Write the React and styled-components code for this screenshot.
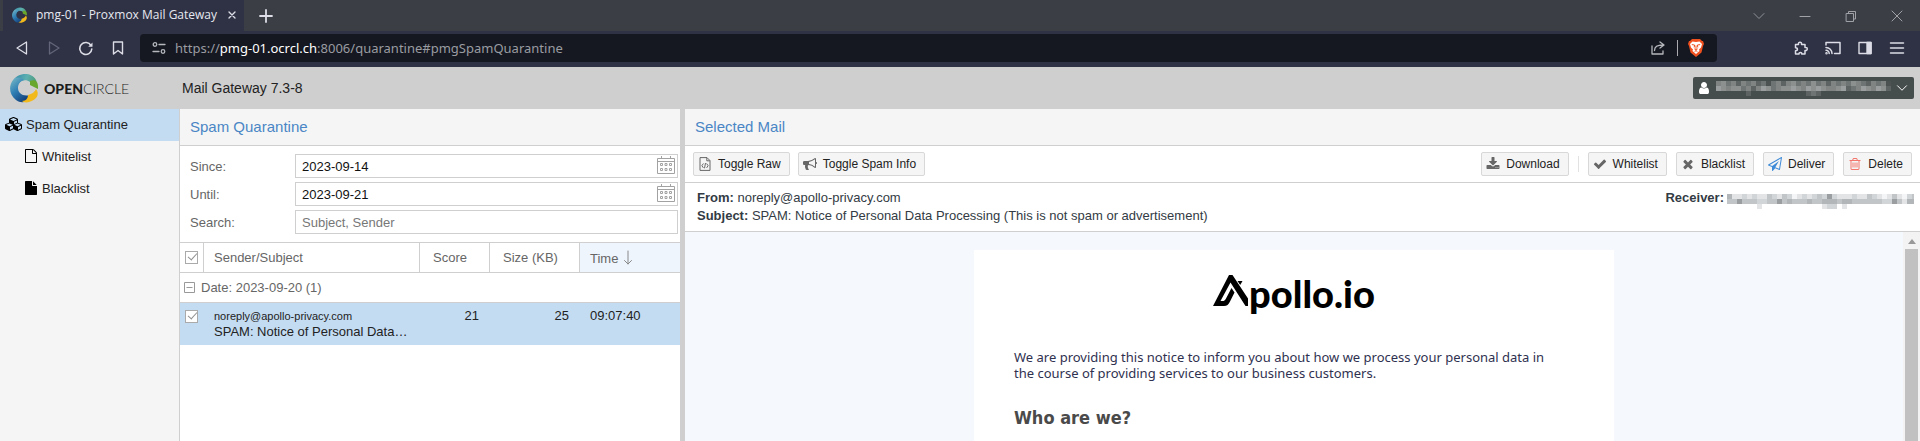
import React from "react";
import styled, { createGlobalStyle } from "styled-components";

const Global = createGlobalStyle`
  *, *::before, *::after { box-sizing: border-box; }
  body { margin: 0; font-family: "Liberation Sans", Arial, sans-serif; font-size: 13px; }
  button { font: inherit; border: 0; background: none; padding: 0; cursor: pointer; }
  h1, h2, p { margin: 0; font-weight: normal; }
  svg { flex-shrink: 0; }
`;

/* ---------- icons ---------- */

const FA = {
  download: "M1344 1344q0-26-19-45t-45-19-45 19-19 45 19 45 45 19 45-19 19-45zm256 0q0-26-19-45t-45-19-45 19-19 45 19 45 45 19 45-19 19-45zm128-224v320q0 40-28 68t-68 28h-1472q-40 0-68-28t-28-68v-320q0-40 28-68t68-28h465l135 136q58 56 136 56t136-56l136-136h464q40 0 68 28t28 68zm-325-569q17 41-14 70l-448 448q-18 19-45 19t-45-19l-448-448q-31-29-14-70 17-39 59-39h256v-448q0-26 19-45t45-19h256q26 0 45 19t19 45v448h256q42 0 59 39z",
  check: "M1671 566q0 40-28 68l-724 724-136 136q-28 28-68 28t-68-28l-136-136-362-362q-28-28-28-68t28-68l136-136q28-28 68-28t68 28l294 295 656-657q28-28 68-28t68 28l136 136q28 28 28 68z",
  times: "M1490 1322q0 40-28 68l-136 136q-28 28-68 28t-68-28l-294-294-294 294q-28 28-68 28t-68-28l-136-136q-28-28-28-68t28-68l294-294-294-294q-28-28-28-68t28-68l136-136q28-28 68-28t68 28l294 294 294-294q28-28 68-28t68 28l136 136q28 28 28 68t-28 68l-294 294 294 294q28 28 28 68z",
  user: "M1536 1399q0 109-62.5 187t-150.5 78h-854q-88 0-150.5-78t-62.5-187q0-85 8.5-160.5t31.5-152 58.5-131 94-89 134.5-34.5q131 128 313 128t313-128q76 0 134.5 34.5t94 89 58.5 131 31.5 152 8.5 160.5zm-256-887q0 159-112.5 271.5t-271.5 112.5-271.5-112.5-112.5-271.5 112.5-271.5 271.5-112.5 271.5 112.5 112.5 271.5z",
  plane: "M1764 11q33 24 27 64l-256 1536q-5 29-32 45-14 8-31 8-11 0-24-5l-527-215-298 327q-18 21-47 21-14 0-23-4-19-7-30-23.5t-11-36.5v-452l-472-193q-37-14-40-55-3-39 32-59l1664-960q35-21 68 2zm-342 1499l221-1323-1434 827 336 137 863-639-478 797z",
  fileO: "M1596 380q28 28 48 76t20 88v1152q0 40-28 68t-68 28h-1344q-40 0-68-28t-28-68v-1600q0-40 28-68t68-28h896q40 0 88 20t76 48zm-444-244v376h376q-10-29-22-41l-313-313q-12-12-41-22zm384 1528v-1024h-416q-40 0-68-28t-28-68v-416h-768v1536h1280z",
  file: "M1152 512v-472q22 14 36 28l408 408q14 14 28 36h-472zm-128 32q0 40 28 68t68 28h544v1056q0 40-28 68t-68 28h-1344q-40 0-68-28t-28-68v-1600q0-40 28-68t68-28h800v544z",
  trash: "M704 736v576q0 14-9 23t-23 9h-64q-14 0-23-9t-9-23v-576q0-14 9-23t23-9h64q14 0 23 9t9 23zm256 0v576q0 14-9 23t-23 9h-64q-14 0-23-9t-9-23v-576q0-14 9-23t23-9h64q14 0 23 9t9 23zm256 0v576q0 14-9 23t-23 9h-64q-14 0-23-9t-9-23v-576q0-14 9-23t23-9h64q14 0 23 9t9 23zm128 724v-948h-896v948q0 22 7 40.5t14.5 27 10.5 8.5h832q3 0 10.5-8.5t14.5-27 7-40.5zm-672-1076h448l-48-117q-7-9-17-11h-317q-10 2-17 11zm928 32v64q0 14-9 23t-23 9h-96v948q0 83-47 143.5t-113 60.5h-832q-66 0-113-58.5t-47-141.5v-952h-96q-14 0-23-9t-9-23v-64q0-14 9-23t23-9h309l70-167q15-37 54-63t79-26h320q40 0 79 26t54 63l70 167h309q14 0 23 9t9 23z",
  bullhorn: "M1664 640q53 0 90.5 37.5t37.5 90.5-37.5 90.5-90.5 37.5v384q0 52-38 90t-90 38q-417-347-812-380-58 19-91 66t-31 100.5 40 92.5q-20 33-23 65.5t6 58 33.5 55 48 50 61.5 50.5q-29 58-111.5 83t-168.5 11.5-132-55.5q-7-23-29.5-87.5t-32-94.5-23-89-15-101 3.5-98.5 22-110.5h-122q-66 0-113-47t-47-113v-192q0-66 47-113t113-47h480q435 0 896-384 52 0 90 38t38 90v384zm-128 604v-954q-394 302-768 343v270q377 42 768 341z",
  cubes: "M640 1632l384-192v-314l-384 164v342zm-64-454l404-173-404-173-404 173zm1088 454l384-192v-314l-384 164v342zm-64-454l404-173-404-173-404 173zm-448-293l384-165v-266l-384 164v267zm-64-379l441-189-441-189-441 189zm1088 518v416q0 36-19 67t-52 47l-448 224q-25 14-57 14t-57-14l-448-224q-4-2-7-4-2 2-7 4l-448 224q-25 14-57 14t-57-14l-448-224q-33-16-52-47t-19-67v-416q0-38 21.5-70t56.5-48l434-186v-400q0-38 21.5-70t56.5-48l448-192q23-10 50-10t50 10l448 192q35 16 56.5 48t21.5 70v400l434 186q36 16 57 48t21 70z",
};

const Fa = ({ name, size = 14, wide }) => (
  <svg width={wide ? 18 : size} height={size} viewBox={wide ? "0 0 2304 1792" : "0 0 1792 1792"} fill="currentColor" aria-hidden="true">
    <path d={FA[name]} />
  </svg>
);

const Line = ({ size = 16, width = 1.3, children }) => (
  <svg width={size} height={size} viewBox="0 0 16 16" fill="none" stroke="currentColor" strokeWidth={width} strokeLinejoin="round" strokeLinecap="round" aria-hidden="true">
    {children}
  </svg>
);

const FileCode = () => (
  <svg width="14" height="14" viewBox="0 0 14 14" fill="none" stroke="currentColor" aria-hidden="true">
    <path d="M2 .6h7l3 3v9.8H2z M8.8.8v3h3" />
    <path d="M5.4 6.5 3.9 8.7l1.5 2.2M8.6 6.5l1.5 2.2-1.5 2.2M7.5 6l-1 5.3" />
  </svg>
);

const OpenCircleMark = ({ size, id }) => (
  <svg width={size} height={size} viewBox="0 0 30 30" aria-hidden="true">
    <defs>
      <linearGradient id={id + "a"} x1="0" y1="0" x2="1" y2="0.2">
        <stop offset="0" stopColor="#2f86a8" /><stop offset="0.6" stopColor="#5db0b0" /><stop offset="1" stopColor="#4f9d7c" />
      </linearGradient>
      <linearGradient id={id + "b"} x1="0" y1="0" x2="0.7" y2="1">
        <stop offset="0" stopColor="#7cbdc6" /><stop offset="0.5" stopColor="#2f7fb5" /><stop offset="1" stopColor="#123d78" />
      </linearGradient>
    </defs>
    <path d="M3 8C7 0 21-2 26 7l1 4-7-2C15 5 8 8 7 15z" fill={`url(#${id}a)`} />
    <path d="M20 8c5-2 8 0 8 6v2l-8-4z" fill="#69a62c" />
    <path d="M4 6C-2 12-1 22 6 27c5 4 11 2 13-1l1-4C13 24 8 20 8 15c0-4 2-7 6-8-4-3-8-3-10-1z" fill={`url(#${id}b)`} />
    <path d="M18 22c4-1 7-3 8-6 4 5 1 11-7 13-3 1-6 0-7-1 4 0 6-3 6-6z" fill="#f2b91d" />
  </svg>
);

const BraveLion = () => (
  <svg width="18" height="20" viewBox="0 0 18 20" aria-hidden="true">
    <path d="M5 1h8l2 2h1l1 3-1 2-1.500 6.500L9 19l-5.500-4.500L2 8 1 6l1-3h1z" fill="#f0501e" />
    <path d="M5.500 3.500 9 4l3.500-.5L15 6l-1 3.500-2 2 .5 1.500L9 16l-3.500-3 .5-1.500-2-2L3 6z" fill="#fff" />
    <path d="M4.800 6.600 7.600 7l-.4 2.500M13.200 6.600l-2.800.4.4 2.500M9 7.500v3.500M7.300 10.800 9 12l1.700-1.200M7.600 13.600 9 12.600l1.400 1" stroke="#f0501e" fill="none" />
  </svg>
);

const Calendar = () => (
  <svg width="18" height="18" viewBox="0 0 18 18" fill="none" stroke="#a2a2a2" aria-hidden="true">
    <path d="M.5 2.500h17v15H.5zM.5 5.500h17M4.500 0v3M13.500 0v3" />
    <path d="M3.500 7.500h2v2h-2zM8 7.500h2v2H8zM12.500 7.500h2v2h-2zM3.500 12.500h2v2h-2zM8 12.500h2v2H8zM12.500 12.500h2v2h-2z" />
  </svg>
);

const ApolloA = () => (
  <svg width="36" height="34" viewBox="0 0 36 34" aria-hidden="true">
    <path d="M16 1h3.500L35 24.500V32h-2.500L17.500 8.500 7.500 27h2c1.500 0 2.500-.5 3.500-2.500L18.500 14l3 4.500-4.500 9c-1.500 3-3 4.500-6 4.500H0z" />
    <path d="M24.500 7h5l-2.300 4z" />
  </svg>
);

/* Rows of grey levels for a name that is shown only as coarse blocks. */
const Mosaic = ({ width, cell, rows, label }) => (
  <svg width={width} height={cell * rows.length} role="img" aria-label={label} shapeRendering="crispEdges">
    {rows.map((row, y) => row.map((c, x) => c && <rect key={`${x}-${y}`} x={x * cell} y={y * cell} width={cell} height={cell} fill={c} />))}
  </svg>
);

const shades = (text, palette) => [...text].map((ch) => (ch === "." ? null : palette[+ch]));
const darkPalette = ["#4c5251", "#5d6362", "#6e7473", "#808584", "#8c9190", "#9a9e9e"];
const lightPalette = ["#f4f5f6", "#e2e4e6", "#d2d5d7", "#c2c5c7", "#b3b6b8", "#9a9ea1"];
const userRows = [
  shades("34231323120231342324231323243213230", darkPalette),
  shades("54344231354234454354543345123543541", darkPalette),
  shades("......1...........121..............", darkPalette),
];
const receiverRows = [
  shades("41121211321320121232521112113210131023", lightPalette),
  shades("33533322335343334334443443333332253144", lightPalette),
  shades("......1............122.1..............", lightPalette),
];

/* ---------- browser chrome ---------- */

const Page = styled.div`
  display: flex;
  flex-direction: column;
  min-height: 100vh;
  background: #fff;
`;

const TabBar = styled.div`
  display: flex;
  justify-content: space-between;
  height: 31px;
  padding-left: 3px;
  background: #3c3e46;
  color: #a0a2a8;
`;

const TabGroup = styled.div`
  display: flex;
  align-items: center;
`;

const Tab = styled.div`
  display: flex;
  align-items: center;
  gap: 8px;
  width: 241px;
  height: 31px;
  padding: 0 6px 2px 9px;
  background: #2f3144;
  color: #e6e8f0;
  font: 500 12px "Open Sans", sans-serif;
`;

const TabTitle = styled.span`
  flex: 1;
  white-space: nowrap;
`;

const ChromeButton = styled.button`
  display: flex;
  align-items: center;
  justify-content: center;
  width: ${(p) => p.$w || 32}px;
  height: 28px;
  color: ${(p) => p.$color || "#dcdde6"};
`;

const NavBar = styled.div`
  display: flex;
  align-items: center;
  height: 36px;
  padding: 0 7px 2px 6px;
  background: #2f3144;
`;

const AddressBar = styled.div`
  display: flex;
  align-items: center;
  flex: 1;
  height: 28px;
  margin: 0 68px 0 6px;
  padding: 0 3px;
  border-radius: 4px;
  background: #151820;
  color: #9a9ca2;
`;

const Address = styled.div`
  flex: 1;
  font: 13px "Noto Sans", sans-serif;
  b { font-weight: 400; color: #fff; }
`;

const Divider = styled.span`
  width: 1px;
  height: 16px;
  background: ${(p) => p.$color || "#a9abb0"};
`;

/* ---------- application header ---------- */

const AppHeader = styled.header`
  display: flex;
  align-items: center;
  height: 42px;
  padding: 0 6px 0 10px;
  background: #cfcfcf;
`;

const Brand = styled.a`
  display: flex;
  align-items: center;
  gap: 4px;
  width: 172px;
  color: #1c1c1c;
  text-decoration: none;
  font: 300 14px Lato, sans-serif;
  b { font-weight: 900; }
`;

const Product = styled.h1`
  flex: 1;
  font-size: 14px;
  color: #222;
`;

const UserButton = styled.button`
  display: flex;
  align-items: center;
  gap: 5px;
  height: 22px;
  padding: 0 6px 0 4px;
  border-radius: 2px;
  background: #464d4d;
  color: #fff;
`;

/* ---------- work area ---------- */

const Work = styled.div`
  display: flex;
  flex: 1;
`;

const Sidebar = styled.nav`
  width: 180px;
  border-right: 1px solid #cfcfcf;
  background: #f5f5f5;
`;

const NavItem = styled.a`
  display: flex;
  align-items: center;
  gap: ${(p) => (p.$child ? 4 : 3)}px;
  height: 32px;
  padding: 0 0 2px ${(p) => (p.$child ? 24 : 5)}px;
  background: ${(p) => (p.$active ? "#c4dcf2" : "none")};
  color: #222;
  text-decoration: none;
  svg { color: #000; }
`;

const Panel = styled.section`
  display: flex;
  flex-direction: column;
  ${(p) => (p.$grow ? "flex: 1; min-width: 0;" : "width: 505px; border-right: 5px solid #cfcfcf;")}
`;

const PanelTitle = styled.h2`
  height: 37px;
  padding: 0 10px;
  border-bottom: 1px solid #cfcfcf;
  background: #f5f5f5;
  color: #4a86c5;
  font-size: 15px;
  line-height: 35px;
`;

const Filters = styled.form`
  display: grid;
  gap: 4px;
  padding: 8px 2px 8px 10px;
`;

const Field = styled.div`
  display: grid;
  grid-template-columns: 105px 1fr;
  align-items: center;
  color: #666;
`;

const InputBox = styled.div`
  display: flex;
  align-items: center;
  height: 24px;
  padding-right: 2px;
  border: 1px solid #cfcfcf;
  input {
    flex: 1;
    min-width: 0;
    height: 22px;
    padding: 0 6px;
    border: 0;
    outline: 0;
    background: none;
    font: inherit;
    color: #111;
  }
  input::placeholder { color: #777; opacity: 1; }
`;

const Grid = styled.table`
  width: 100%;
  table-layout: fixed;
  border-spacing: 0;
  color: #222;
`;

const HeadCell = styled.th`
  height: 31px;
  padding: 0 0 0 ${(p) => p.$pad || 10}px;
  border: solid #cfcfcf;
  border-width: 1px 0 1px ${(p) => (p.$first ? 0 : 1)}px;
  background: ${(p) => (p.$sorted ? "#eff5fd" : "#fff")};
  color: #666;
  font-weight: normal;
  text-align: left;
  svg { vertical-align: -3px; color: #888; }
`;

const CheckCell = styled.td`
  padding: 7px 0 0 5px;
  vertical-align: top;
`;

const GroupCell = styled.td`
  height: 30px;
  padding: 0 4px;
  border-bottom: 1px solid #cfcfcf;
  color: #666;
`;

const GroupToggle = styled.button`
  display: flex;
  align-items: center;
  gap: 6px;
  color: inherit;
`;

const MailRow = styled.tr`
  height: 42px;
  background: #c4dcf2;
`;

const Cell = styled.td`
  padding: 5px 10px 5px 11px;
  vertical-align: top;
  text-align: ${(p) => p.$align || "left"};
  line-height: 16px;
`;

const Sender = styled.div`
  font-size: 11px;
`;

const Tick = styled.input.attrs({ type: "checkbox" })`
  appearance: none;
  display: block;
  width: 13px;
  height: 13px;
  margin: 0;
  border: 1px solid #aaa;
  background: #fff;
  &:checked::after {
    content: "";
    display: block;
    width: 5px;
    height: 9px;
    margin: -1px 0 0 4px;
    border: solid #909090;
    border-width: 0 1px 1px 0;
    transform: rotate(42deg);
  }
`;

/* ---------- selected mail ---------- */

const Toolbar = styled.div`
  display: flex;
  align-items: center;
  justify-content: space-between;
  height: 37px;
  padding: 0 8px;
  border-bottom: 1px solid #cfcfcf;
`;

const Actions = styled.div`
  display: flex;
  align-items: center;
  gap: ${(p) => p.$gap}px;
`;

const ToolButton = styled.button`
  display: flex;
  align-items: center;
  gap: 6px;
  height: 24px;
  padding: 0 8px 0 4px;
  border: 1px solid #d8d8d8;
  border-radius: 2px;
  background: #f5f5f5;
  color: #222;
  font-size: 12px;
  svg { color: ${(p) => p.$icon || "#666"}; }
`;

const Envelope = styled.div`
  display: flex;
  justify-content: space-between;
  height: 49px;
  padding: 6px 6px 0 12px;
  border-bottom: 1px solid #cfcfcf;
  color: #333b44;
  font-size: 13px;
  line-height: 18px;
`;

const Receiver = styled.div`
  display: flex;
  gap: 3px;
  svg { margin-top: 5px; }
`;

const Viewer = styled.div`
  display: flex;
  flex: 1;
  background: #f5f9fd;
`;

const MailCanvas = styled.div`
  flex: 1;
  padding: 18px 0 0;
`;

const Letter = styled.article`
  width: 640px;
  height: 100%;
  margin: 0 auto;
  padding: 24px 48px 0 40px;
  background: #fff;
  color: #2f3150;
  font: 13px/16px "Noto Sans", sans-serif;
  h2 {
    margin-top: 24px;
    color: #4a4a4a;
    font: bold 18px/26px "DejaVu Sans Condensed", "DejaVu Sans", sans-serif;
  }
`;

const ApolloLogo = styled.div`
  display: flex;
  justify-content: center;
  height: 75px;
  padding-left: 8px;
  color: #000;
  font: 900 38px/38px Lato, sans-serif;
`;

const ScrollTrack = styled.div`
  display: flex;
  flex-direction: column;
  align-items: center;
  width: 17px;
  padding: 7px 1px 0;
  background: #f3f3f3;
  &::before {
    content: "";
    margin-bottom: 5px;
    border: solid transparent;
    border-width: 0 4px 5px;
    border-bottom-color: #999;
  }
`;

const ScrollThumb = styled.div`
  flex: 1;
  width: 13px;
  background: #c1c1c1;
`;

const DateField = ({ id, label, value }) => (
  <Field>
    <label htmlFor={id}>{label}</label>
    <InputBox>
      <input id={id} defaultValue={value} />
      <button type="button" aria-label={`Pick ${label}`}><Calendar /></button>
    </InputBox>
  </Field>
);

const Tool = ({ icon, color, children }) => (
  <ToolButton $icon={color}>{typeof icon === "string" ? <Fa name={icon} /> : icon}{children}</ToolButton>
);

export default function App() {
  return (
    <Page>
      <Global />
      <TabBar>
        <TabGroup>
          <Tab>
            <OpenCircleMark size={16} id="tab" />
            <TabTitle>pmg-01 - Proxmox Mail Gateway</TabTitle>
            <ChromeButton $w={12} aria-label="Close tab"><Line size={12} width={1.8}><path d="M4 4l8 8M12 4l-8 8" /></Line></ChromeButton>
          </Tab>
          <ChromeButton $w={44} aria-label="New tab"><Line width={1.8}><path d="M8 2v12M2 8h12" /></Line></ChromeButton>
        </TabGroup>
        <TabGroup>
          <ChromeButton $w={46} $color="#8f9197" aria-label="Search tabs"><Line width={1}><path d="M3 5.500l5 5 5-5" /></Line></ChromeButton>
          <ChromeButton $w={46} $color="#a0a2a8" aria-label="Minimize"><Line width={1}><path d="M3 8.500h10" /></Line></ChromeButton>
          <ChromeButton $w={46} $color="#a0a2a8" aria-label="Restore"><Line width={1}><path d="M3.500 5.500h7v8h-7zM5.500 5V3.500h7V11h-1.500" /></Line></ChromeButton>
          <ChromeButton $w={46} $color="#a0a2a8" aria-label="Close"><Line width={1}><path d="M3 3l10 10M13 3L3 13" /></Line></ChromeButton>
        </TabGroup>
      </TabBar>
      <NavBar>
        <ChromeButton aria-label="Back"><Line><path d="M12.500 2v12L3 8z" /></Line></ChromeButton>
        <ChromeButton $color="#63657a" aria-label="Forward"><Line><path d="M3.500 2v12L13 8z" /></Line></ChromeButton>
        <ChromeButton aria-label="Reload"><Line width={1.6}><path d="M13 5.500A6 6 0 1 0 13.800 9" /><path d="M14.500 2.500v4.300h-4.300z" fill="currentColor" stroke="none" /></Line></ChromeButton>
        <ChromeButton aria-label="Bookmark"><Line width={1.4}><path d="M3.500 2h9v12L8 10.500 3.500 14z" /></Line></ChromeButton>
        <AddressBar>
          <ChromeButton $color="#b5b7bc" aria-label="Site settings"><Line><circle cx="4" cy="4.500" r="1.800" /><path d="M8 4.500h6M2 11.500h6" /><circle cx="12" cy="11.500" r="1.800" /></Line></ChromeButton>
          <Address>https://<b>pmg-01.ocrcl.ch</b>:8006/quarantine#pmgSpamQuarantine</Address>
          <ChromeButton $w={38} $color="#b5b7bc" aria-label="Share"><Line><path d="M2 6v8h11v-3M4.500 10.500c0-4 3-5.500 8.500-5.500M10 2l4 3-4 3" /></Line></ChromeButton>
          <Divider />
          <ChromeButton $w={36} aria-label="Brave Shields"><BraveLion /></ChromeButton>
        </AddressBar>
        <ChromeButton aria-label="Extensions"><Line width={1.5}><path d="M2.500 4.500h3c-.8-3 3.800-3 3 0h3.500v3c3-.8 3 3.600 0 3v3.500H8.700c.5-2-3-2-2.700 0H2.500v-3.300c2.600 0 2.600-3 0-3z" /></Line></ChromeButton>
        <ChromeButton aria-label="Cast"><Line width={1.5}><path d="M1 5V2.500h14v11H9.500M1 7.500a6 6 0 0 1 6 6M1 10.300a3.200 3.200 0 0 1 3.200 3.200" /><circle cx="1.500" cy="13.200" r=".5" /></Line></ChromeButton>
        <ChromeButton aria-label="Side panel"><Line width={1.4}><path d="M2 2.500h12v11H2z" /><path d="M10 2.500h4v11h-4z" fill="currentColor" /></Line></ChromeButton>
        <ChromeButton aria-label="Menu"><Line width={1.5}><path d="M1.500 3h13M1.500 8h13M1.500 13h13" /></Line></ChromeButton>
      </NavBar>

      <AppHeader>
        <Brand href="#"><OpenCircleMark size={30} id="brand" /><span><b>OPEN</b>CIRCLE</span></Brand>
        <Product>Mail Gateway 7.3-8</Product>
        <UserButton>
          <Fa name="user" />
          <Mosaic width={175} cell={5} rows={userRows} label="User name" />
          <Line size={12}><path d="M2 5l6 6 6-6" /></Line>
        </UserButton>
      </AppHeader>

      <Work>
        <Sidebar>
          <NavItem href="#" $active><Fa name="cubes" wide />Spam Quarantine</NavItem>
          <NavItem href="#" $child><Fa name="fileO" />Whitelist</NavItem>
          <NavItem href="#" $child><Fa name="file" />Blacklist</NavItem>
        </Sidebar>

        <Panel>
          <PanelTitle>Spam Quarantine</PanelTitle>
          <Filters>
            <DateField id="since" label="Since:" value="2023-09-14" />
            <DateField id="until" label="Until:" value="2023-09-21" />
            <Field>
              <label htmlFor="search">Search:</label>
              <InputBox><input id="search" placeholder="Subject, Sender" /></InputBox>
            </Field>
          </Filters>
          <Grid>
            <colgroup>
              <col width="23" /><col width="216" /><col width="70" /><col width="90" /><col />
            </colgroup>
            <thead>
              <tr>
                <HeadCell $first $pad={5}><Tick defaultChecked aria-label="Select all" /></HeadCell>
                <HeadCell>Sender/Subject</HeadCell>
                <HeadCell $pad={13}>Score</HeadCell>
                <HeadCell $pad={13}>Size (KB)</HeadCell>
                <HeadCell $sorted>Time <Line width={1}><path d="M6 1v13M2.500 10.500L6 14l3.500-3.500" /></Line></HeadCell>
              </tr>
            </thead>
            <tbody>
              <tr>
                <GroupCell colSpan={5}>
                  <GroupToggle>
                    <svg width="11" height="11" fill="none" stroke="#999" aria-hidden="true"><path d="M.5.5h10v10H.5zM2.500 5.500h6" /></svg>
                    Date: 2023-09-20 (1)
                  </GroupToggle>
                </GroupCell>
              </tr>
              <MailRow>
                <CheckCell><Tick defaultChecked aria-label="Select mail" /></CheckCell>
                <Cell>
                  <Sender>noreply@apollo-privacy.com</Sender>
                  <div>SPAM: Notice of Personal Data…</div>
                </Cell>
                <Cell $align="right">21</Cell>
                <Cell $align="right">25</Cell>
                <Cell>09:07:40</Cell>
              </MailRow>
            </tbody>
          </Grid>
        </Panel>

        <Panel $grow>
          <PanelTitle>Selected Mail</PanelTitle>
          <Toolbar>
            <Actions $gap={8}>
              <Tool icon={<FileCode />}>Toggle Raw</Tool>
              <Tool icon="bullhorn">Toggle Spam Info</Tool>
            </Actions>
            <Actions $gap={9}>
              <Tool icon="download">Download</Tool>
              <Divider $color="#e2e2e2" />
              <Tool icon="check">Whitelist</Tool>
              <Tool icon="times">Blacklist</Tool>
              <Tool icon="plane" color="#3d8ad8">Deliver</Tool>
              <Tool icon="trash" color="#f4756b">Delete</Tool>
            </Actions>
          </Toolbar>
          <Envelope>
            <div>
              <div><b>From:</b> noreply@apollo-privacy.com</div>
              <div><b>Subject:</b> SPAM: Notice of Personal Data Processing (This is not spam or advertisement)</div>
            </div>
            <Receiver><b>Receiver:</b><Mosaic width={187} cell={5} rows={receiverRows} label="Receiver address" /></Receiver>
          </Envelope>
          <Viewer>
            <MailCanvas>
              <Letter>
                <ApolloLogo><ApolloA />pollo.io</ApolloLogo>
                <p>We are providing this notice to inform you about how we process your personal data in the course of providing services to our business customers.</p>
                <h2>Who are we?</h2>
              </Letter>
            </MailCanvas>
            <ScrollTrack><ScrollThumb /></ScrollTrack>
          </Viewer>
        </Panel>
      </Work>
    </Page>
  );
}
